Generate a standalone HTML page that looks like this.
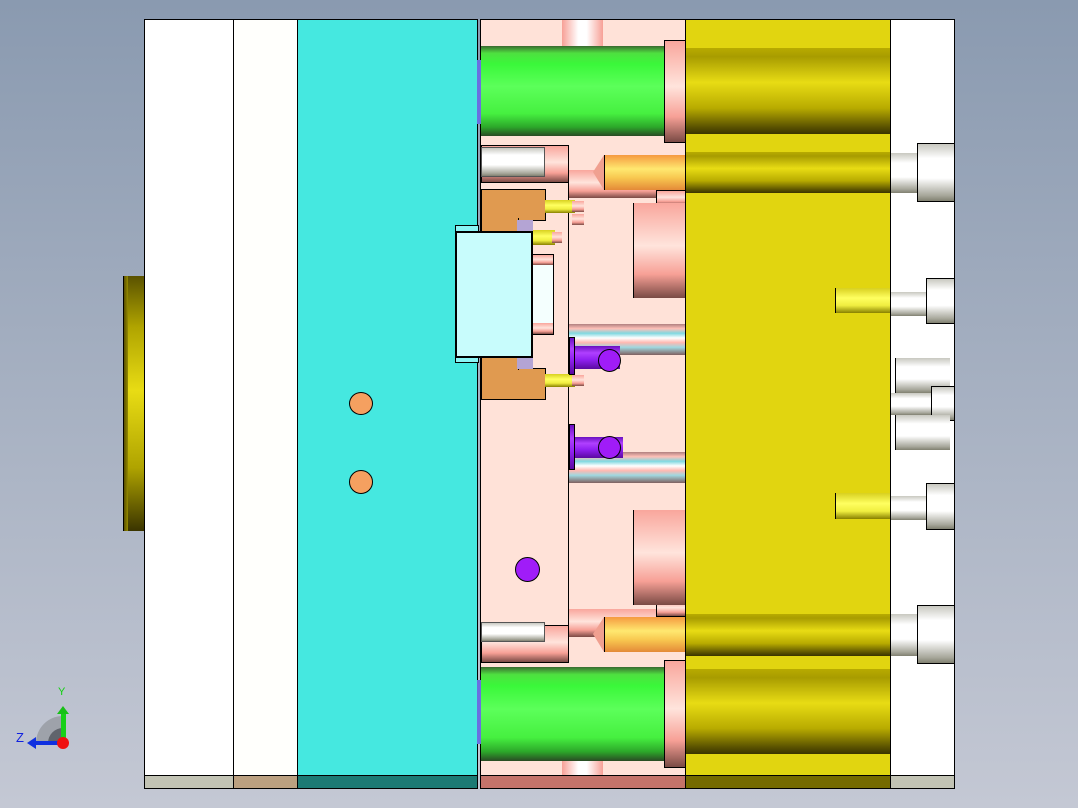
<!DOCTYPE html>
<html><head><meta charset="utf-8"><style>
*{margin:0;padding:0;box-sizing:border-box}
body{width:1078px;height:808px;overflow:hidden;position:relative;background:linear-gradient(#8a9ab0,#c4c8d4);font-family:"Liberation Sans",sans-serif}
div{position:absolute}
.b{border:1px solid #000}
.pk{background:linear-gradient(#f9a69c,#ffe4dc 45%,#f7a096 75%,#7a4a44)}
.pkh{background:linear-gradient(90deg,#f7a096,#fff 40%,#fff 60%,#f7a096)}
.gr{background:linear-gradient(#3a6a30,#4fe040 8%,#3af83a 20%,#5cff5a 45%,#46f040 75%,#2ca82a 90%,#2a4a24);}
.yc{background:linear-gradient(#b8ab00,#a89c00 10%,#e8dc14 40%,#b8ab00 70%,#5a5200 92%,#3a3400)}
.op{background:linear-gradient(#f59a40,#ffe870 40%,#f8c850 65%,#e48a38)}
.wh{background:linear-gradient(#c8c8c0,#fff 25%,#fff 60%,#a8a89c 90%,#808070)}
.yp{background:linear-gradient(#d8d020,#ffff60 40%,#f0ee40 70%,#888000)}
.pu{background:linear-gradient(#6a10c0,#b040ff 30%,#9020f0 60%,#5a0aa0)}
.st{background:linear-gradient(#b08080,#ffc0b8 15%,#80d8e0 30%,#fff 45%,#ffb8b0 60%,#a0d8e0 75%,#806060)}
.c{border-radius:50%;border:1px solid #000}
</style></head><body>
<!-- left yellow cylinder -->
<div class="yc" style="left:123px;top:276px;width:22px;height:255px;background:linear-gradient(90deg,#5a5000,#a89c00 25%,#c8bc00 40%,#b8aa00);border-left:1px solid #000"></div>
<div style="left:128px;top:276px;width:17px;height:255px;background:linear-gradient(#5a5200,#b0a400 20%,#e8dc14 45%,#b0a400 75%,#3a3400)"></div>
<!-- plates -->
<div class="b" style="left:144px;top:19px;width:90px;height:770px;background:#fff"></div>
<div class="b" style="left:233px;top:19px;width:65px;height:770px;background:#fffffc"></div>
<div class="b" style="left:297px;top:19px;width:181px;height:770px;background:#45e8e0"></div>
<div class="b" style="left:480px;top:19px;width:206px;height:770px;background:#ffe2d8"></div>
<div class="b" style="left:685px;top:19px;width:206px;height:770px;background:#e1d510"></div>
<div class="b" style="left:890px;top:19px;width:65px;height:770px;background:#fff"></div>
<!-- bottom strips -->
<div class="b" style="left:144px;top:775px;width:90px;height:14px;background:#c2c3b4"></div>
<div class="b" style="left:233px;top:775px;width:65px;height:14px;background:#bba080"></div>
<div class="b" style="left:297px;top:775px;width:181px;height:14px;background:#1c7a74"></div>
<div class="b" style="left:480px;top:775px;width:206px;height:14px;background:#c4736a"></div>
<div class="b" style="left:685px;top:775px;width:206px;height:14px;background:#756a00"></div>
<div class="b" style="left:890px;top:775px;width:65px;height:14px;background:#c2c3b4"></div>
<!-- inner pink divider -->
<div style="left:568px;top:145px;width:1px;height:518px;background:#000"></div>
<!-- sprues -->
<div class="pkh" style="left:562px;top:20px;width:41px;height:27px"></div>
<div class="pkh" style="left:562px;top:757px;width:41px;height:18px"></div>
<!-- green cylinders -->
<div class="gr" style="left:481px;top:46px;width:184px;height:90px"></div>
<div class="gr" style="left:481px;top:667px;width:184px;height:94px"></div>
<div style="left:477px;top:60px;width:4px;height:64px;background:#6a70e0"></div>
<div style="left:477px;top:680px;width:4px;height:64px;background:#6a70e0"></div>
<div class="pk b" style="left:664px;top:40px;width:22px;height:103px"></div>
<div class="pk b" style="left:664px;top:660px;width:22px;height:108px"></div>
<!-- big yellow cylinders -->
<div class="yc" style="left:686px;top:48px;width:204px;height:86px"></div>
<div class="yc" style="left:686px;top:669px;width:204px;height:85px"></div>
<div class="yc" style="left:686px;top:152px;width:204px;height:41px"></div>
<div class="yc" style="left:686px;top:614px;width:204px;height:42px"></div>
<!-- top/bottom pin groups -->
<div class="pk b" style="left:481px;top:145px;width:88px;height:38px"></div>
<div class="wh" style="left:481px;top:147px;width:64px;height:30px;border:1px solid #555"></div>
<div class="pk" style="left:569px;top:170px;width:116px;height:28px"></div>
<div class="op" style="left:604px;top:155px;width:81px;height:35px;border-left:1px solid #000"></div>
<div style="left:593px;top:155px;width:0;height:0;border-top:17px solid transparent;border-bottom:18px solid transparent;border-right:11px solid #f0a090"></div>
<div class="pk b" style="left:656px;top:190px;width:30px;height:16px"></div>
<div class="pk" style="left:633px;top:203px;width:52px;height:95px;border-left:1px solid #000"></div>

<div class="pk b" style="left:481px;top:625px;width:88px;height:38px"></div>
<div class="wh" style="left:481px;top:622px;width:64px;height:20px;border:1px solid #555"></div>
<div class="pk" style="left:569px;top:609px;width:116px;height:28px"></div>
<div class="op" style="left:604px;top:617px;width:81px;height:35px;border-left:1px solid #000"></div>
<div style="left:593px;top:617px;width:0;height:0;border-top:17px solid transparent;border-bottom:18px solid transparent;border-right:11px solid #f0a090"></div>
<div class="pk b" style="left:656px;top:600px;width:30px;height:17px"></div>
<div class="pk" style="left:633px;top:510px;width:52px;height:95px;border-left:1px solid #000"></div>
<!-- right white parts -->
<div class="wh" style="left:891px;top:153px;width:28px;height:40px"></div>
<div class="wh b" style="left:917px;top:143px;width:38px;height:59px"></div>
<div class="wh" style="left:891px;top:614px;width:28px;height:42px"></div>
<div class="wh b" style="left:917px;top:605px;width:38px;height:59px"></div>
<div class="yp" style="left:835px;top:288px;width:55px;height:25px;border-left:1px solid #000"></div>
<div class="wh" style="left:891px;top:292px;width:36px;height:24px"></div>
<div class="wh b" style="left:926px;top:278px;width:29px;height:46px"></div>
<div class="yp" style="left:835px;top:493px;width:55px;height:26px;border-left:1px solid #000"></div>
<div class="wh" style="left:891px;top:496px;width:36px;height:24px"></div>
<div class="wh b" style="left:926px;top:483px;width:29px;height:47px"></div>
<div class="wh" style="left:895px;top:358px;width:55px;height:35px;border-left:1px solid #000"></div>
<div class="wh" style="left:891px;top:393px;width:42px;height:22px"></div>
<div class="wh b" style="left:931px;top:386px;width:24px;height:35px"></div>
<div class="wh" style="left:895px;top:415px;width:55px;height:35px;border-left:1px solid #000"></div>
<!-- centre insert -->
<div class="b" style="left:481px;top:189px;width:65px;height:32px;background:#e09a50"></div>
<div class="b" style="left:481px;top:218px;width:38px;height:14px;background:#e09a50;border-top:none"></div>
<div style="left:517px;top:220px;width:16px;height:12px;background:#b4a4d4"></div>
<div class="b" style="left:481px;top:368px;width:65px;height:32px;background:#e09a50"></div>
<div class="b" style="left:481px;top:357px;width:38px;height:13px;background:#e09a50;border-bottom:none"></div>
<div style="left:517px;top:357px;width:16px;height:12px;background:#b4a4d4"></div>
<div class="yp" style="left:545px;top:200px;width:30px;height:13px"></div>
<div class="pk" style="left:572px;top:201px;width:12px;height:11px"></div>
<div class="pk" style="left:572px;top:214px;width:12px;height:11px"></div>
<div class="yp" style="left:533px;top:230px;width:22px;height:15px"></div>
<div class="pk" style="left:552px;top:232px;width:10px;height:11px"></div>
<div class="yp" style="left:545px;top:374px;width:30px;height:13px"></div>
<div class="pk" style="left:572px;top:375px;width:12px;height:11px"></div>
<div style="left:455px;top:225px;width:24px;height:138px;background:#8af4f4;border:1px solid #000"></div>
<div class="b" style="left:455px;top:231px;width:78px;height:127px;background:#c8fcfc;border-width:2px"></div>
<div class="b" style="left:532px;top:254px;width:22px;height:81px;background:#f4fffe"></div>
<div class="pk" style="left:533px;top:255px;width:20px;height:10px"></div>
<div class="pk" style="left:533px;top:323px;width:20px;height:11px"></div>
<!-- ejector pins -->
<div class="st" style="left:569px;top:324px;width:116px;height:31px"></div>
<div class="pu" style="left:569px;top:337px;width:6px;height:38px;border:1px solid #000"></div>
<div class="pu" style="left:575px;top:346px;width:45px;height:23px"></div>
<div class="c" style="left:598px;top:349px;width:23px;height:23px;background:#a01cf8"></div>
<div class="st" style="left:569px;top:452px;width:116px;height:31px"></div>
<div class="pu" style="left:569px;top:424px;width:6px;height:46px;border:1px solid #000"></div>
<div class="pu" style="left:575px;top:437px;width:48px;height:21px"></div>
<div class="c" style="left:598px;top:436px;width:23px;height:23px;background:#a01cf8"></div>
<div class="c" style="left:515px;top:557px;width:25px;height:25px;background:#a01cf8"></div>
<div class="c" style="left:349px;top:392px;width:24px;height:23px;background:#f5a060"></div>
<div class="c" style="left:349px;top:470px;width:24px;height:24px;background:#f5a060"></div>
<!-- axes -->
<div style="left:36px;top:716px;width:54px;height:54px;border-radius:50%;background:#9ea2aa;clip-path:inset(0 50% 50% 0)"></div>
<div style="left:48px;top:728px;width:30px;height:30px;border-radius:50%;background:#60646c;clip-path:inset(0 50% 50% 0)"></div>
<div style="left:61px;top:713px;width:5px;height:30px;background:#18d018"></div>
<div style="left:57px;top:706px;width:0;height:0;border-left:6px solid transparent;border-right:6px solid transparent;border-bottom:8px solid #18c018"></div>
<div style="left:35px;top:741px;width:28px;height:4px;background:#1030e0"></div>
<div style="left:27px;top:737px;width:0;height:0;border-top:6px solid transparent;border-bottom:6px solid transparent;border-right:9px solid #1030e0"></div>
<div style="left:57px;top:737px;width:12px;height:12px;border-radius:50%;background:#f01010"></div>
<div style="left:58px;top:686px;font-size:11px;color:#10d010">Y</div>
<div style="left:16px;top:730px;font-size:13px;color:#1020e0">Z</div>
</body></html>
